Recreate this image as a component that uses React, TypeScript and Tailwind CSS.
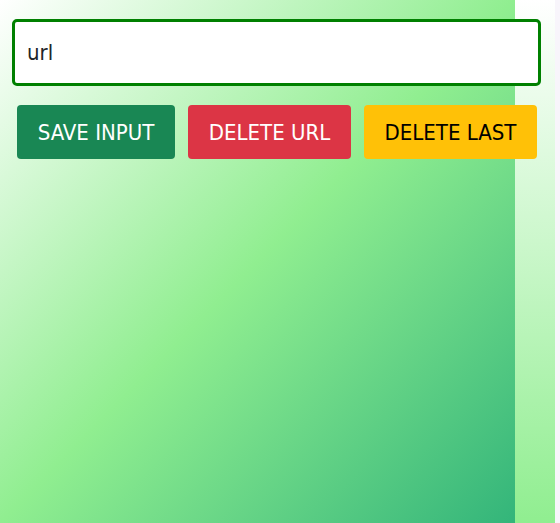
import { useState } from "react";

export default function App() {
  const [value, setValue] = useState("url");

  return (
    <div className="w-full h-[523px] bg-[#f8f5fb] overflow-hidden" style={{ fontFamily: '"DejaVu Sans Condensed", "DejaVu Sans", sans-serif' }}>
      <div className="w-[555px] h-full bg-[linear-gradient(to_bottom,#ffffff,#90ee90)]">
        <div className="w-[515px] h-full bg-[linear-gradient(to_bottom_right,#ffffff,#90ee90,#33b57a)] pt-[19px] pl-[12px]">
          <input
            value={value}
            onChange={(e) => setValue(e.target.value)}
            className="block w-[529px] h-[67px] bg-white border-[3px] border-[#008000] rounded-[5px] px-[12px] text-[22px] text-[#212529] outline-none"
          />
          <div className="flex w-[530px] gap-[13px] mt-[19px] ml-[5px]">
            <button className="shrink-0 h-[54px] w-[158px] rounded-[4px] bg-[#198754] text-white text-[22px]">
              SAVE INPUT
            </button>
            <button className="shrink-0 h-[54px] w-[163px] rounded-[4px] bg-[#dc3545] text-white text-[22px]">
              DELETE URL
            </button>
            <button className="shrink-0 h-[54px] w-[173px] rounded-[4px] bg-[#ffc107] text-black text-[22px]">
              DELETE LAST
            </button>
          </div>
        </div>
      </div>
    </div>
  );
}
